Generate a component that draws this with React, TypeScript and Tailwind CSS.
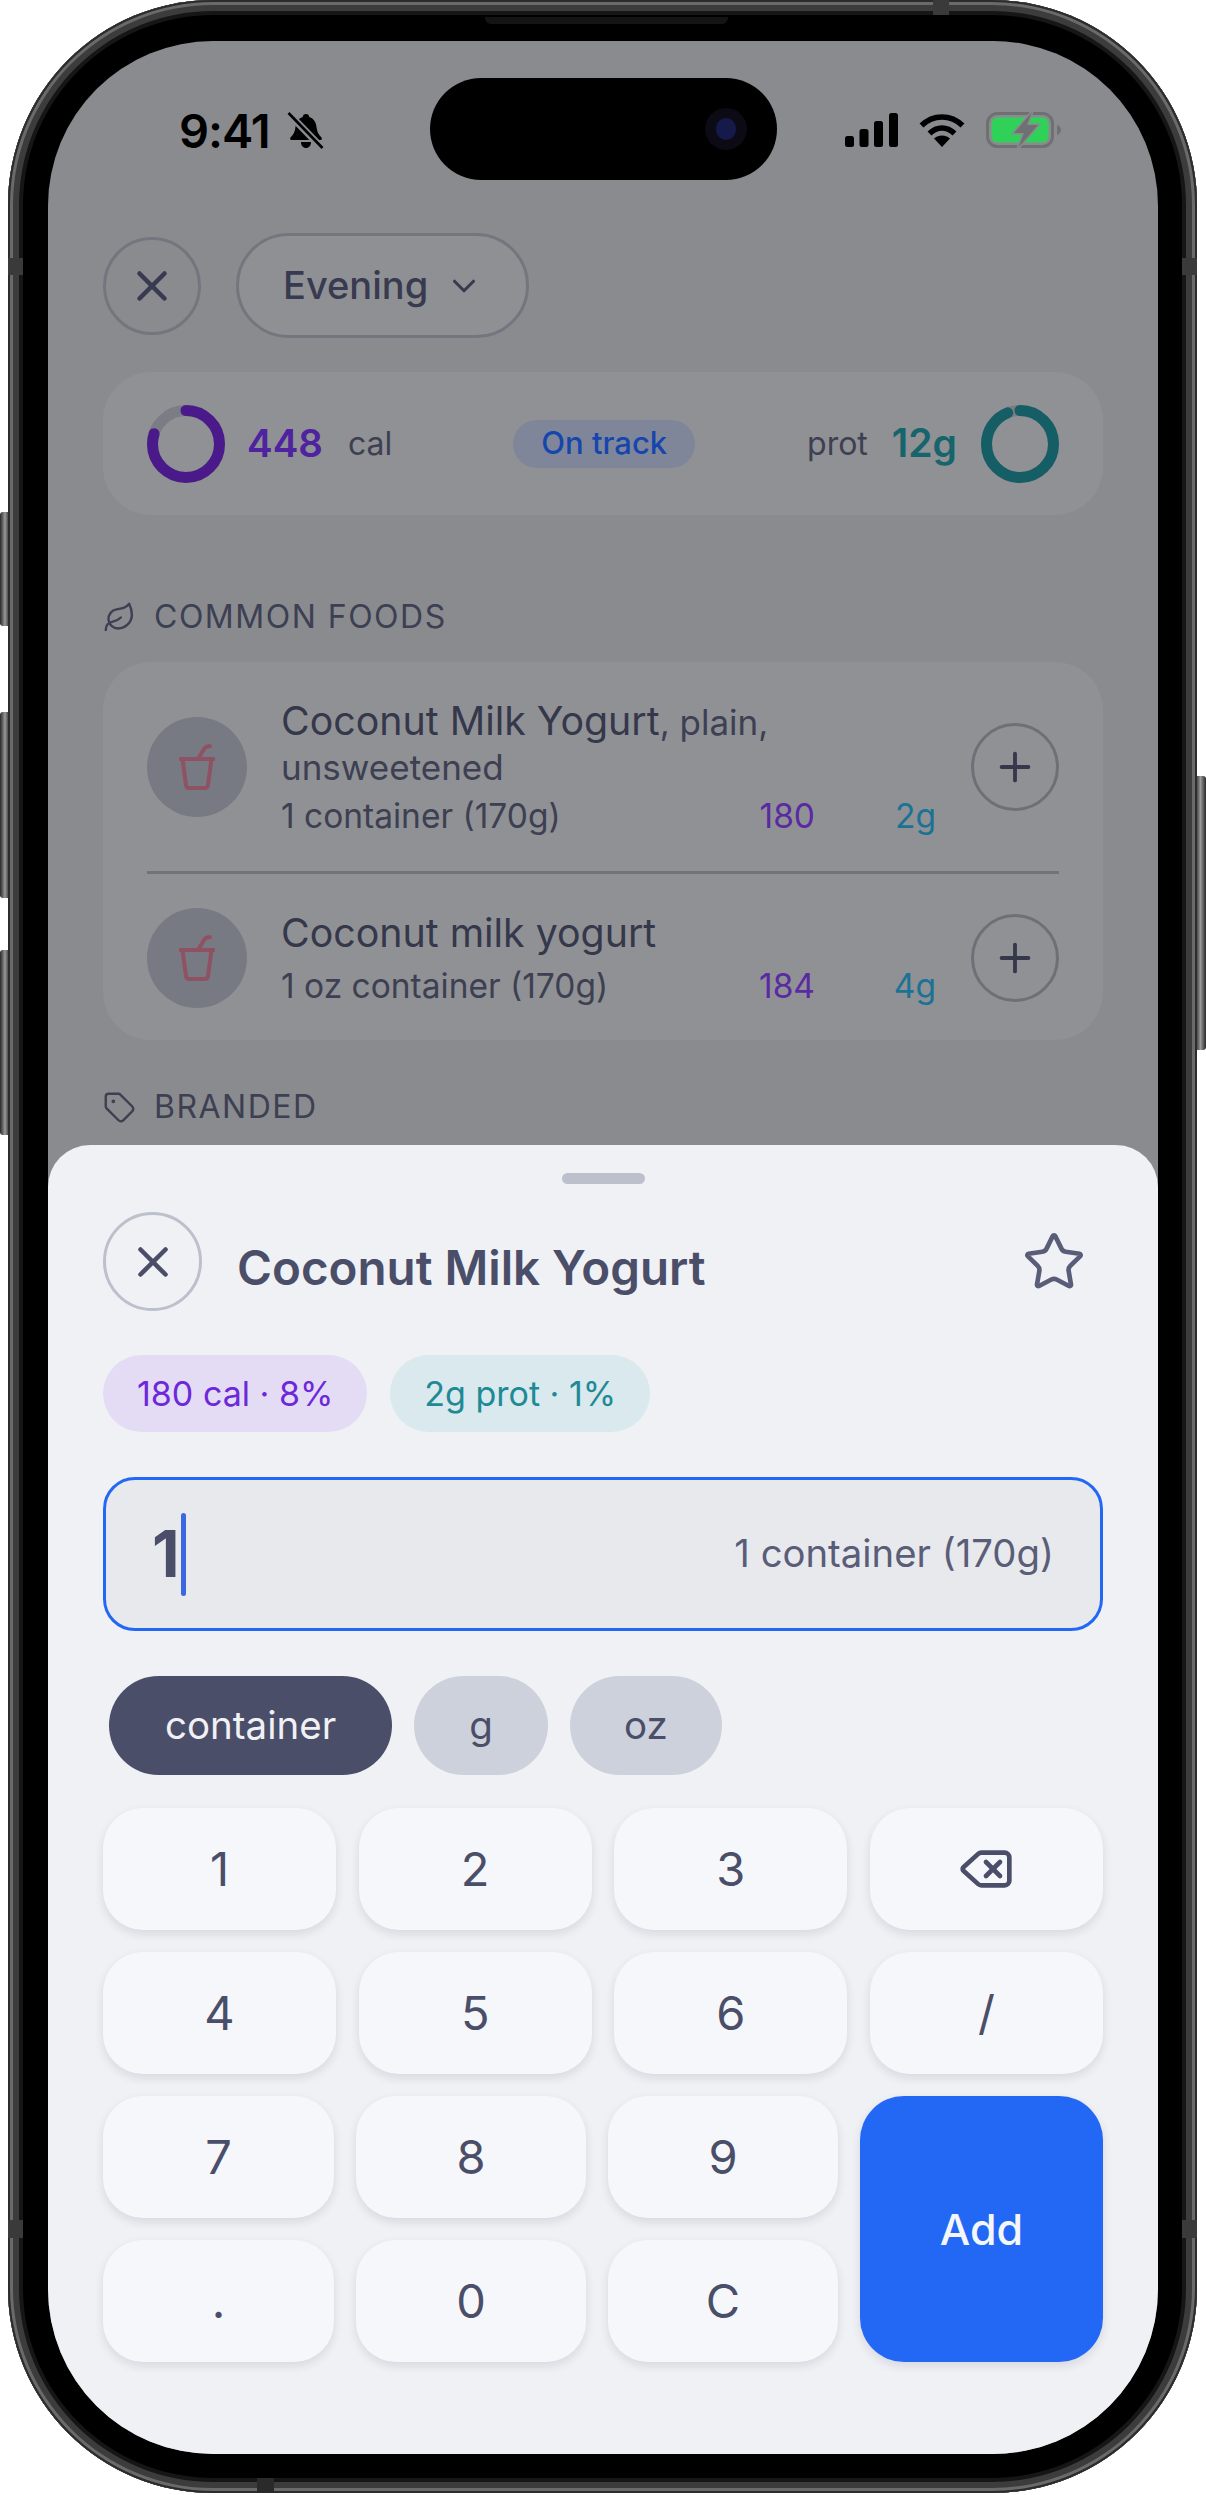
import { ChevronDown, Delete, Leaf, Plus, Star, Tag, X } from "lucide-react";

function Ring({ color, dash }: { color: string; dash: number }) {
  return (
    <svg width="78" height="78" viewBox="0 0 78 78" className="shrink-0 -rotate-90">
      <circle cx="39" cy="39" r="33.5" fill="none" stroke="#7b7d85" strokeWidth="11" />
      <circle
        cx="39"
        cy="39"
        r="33.5"
        fill="none"
        stroke={color}
        strokeWidth="11"
        strokeLinecap="round"
        pathLength={100}
        strokeDasharray={`${dash} 100`}
      />
    </svg>
  );
}

function BellSlash() {
  return (
    <svg width="38" height="37" viewBox="0 0 38 37">
      <path
        d="M19 2c2 0 3 1.200 3.300 3C27 6.500 29 10.500 29.500 15c.4 4 1.500 7 5 10.500.8 1 .3 2.500-1 2.500H4.500c-1.300 0-1.800-1.500-1-2.500C7 22 8.100 19 8.500 15 9 10.500 11 6.500 15.700 5 16 3.200 17 2 19 2z"
        fill="#000"
      />
      <path d="M14 30h10c0 3.500-2 6-5 6s-5-2.500-5-6z" fill="#000" />
      <path d="M3 3l32 33" stroke="#8a8b8f" strokeWidth="7" />
      <path d="M1.500 1l34 35" stroke="#000" strokeWidth="2.600" />
    </svg>
  );
}

function Signal() {
  return (
    <svg width="53" height="34" viewBox="0 0 53 34" fill="#000">
      <rect x="0" y="23" width="9" height="11" rx="2.500" />
      <rect x="14.500" y="16" width="9" height="18" rx="2.500" />
      <rect x="29" y="8" width="9" height="26" rx="2.500" />
      <rect x="44" y="0" width="9" height="34" rx="2.500" />
    </svg>
  );
}

function Wifi() {
  return (
    <svg width="46" height="34" viewBox="0 0 46 34" fill="none" stroke="#000" strokeWidth="5.500">
      <path d="M2.500 12.500C14 1 32 1 43.500 12.500" />
      <path d="M10.500 20.500C18 13 28 13 35.500 20.500" />
      <path d="M23 34l-8-8.500c4.500-4 11.500-4 16 0z" fill="#000" stroke="none" />
    </svg>
  );
}

function Battery() {
  return (
    <svg width="75" height="38" viewBox="0 0 75 38">
      <rect x="1.500" y="2.500" width="65" height="33" rx="10" fill="none" stroke="#6f7072" strokeWidth="3" />
      <rect x="5.500" y="6.500" width="57" height="25" rx="6" fill="#30d158" />
      <path d="M71 14c2.500.8 4 2.600 4 5s-1.500 4.200-4 5z" fill="#6f7072" />
      <path
        d="M46 1L28 22h10l-6 15 20-23H41z"
        fill="#6f7072"
        stroke="#8a8b8f"
        strokeWidth="3"
        paintOrder="stroke"
      />
    </svg>
  );
}

function CupIcon() {
  return (
    <svg width="36" height="46" viewBox="0 0 36 46" fill="none" stroke="#8f5262" strokeWidth="4" strokeLinecap="round" strokeLinejoin="round">
      <path d="M1.500 15h33" />
      <path d="M3.500 15l3.500 26c.2 2 1.500 3 3 3h16c1.500 0 2.800-1 3-3l3.500-26" />
      <path d="M19 15l6-10c1-1.800 3-3 6-2.800" />
    </svg>
  );
}

function SectionLabel({ icon, label, className }: { icon: React.ReactNode; label: string; className: string }) {
  return (
    <div className={`flex h-[36px] items-center gap-[18px] text-[#3d3f52] ${className}`}>
      {icon}
      <span className="text-[32px] tracking-[1.5px]">{label}</span>
    </div>
  );
}

function FoodRow({
  name,
  suffix,
  serving,
  cal,
  prot,
  last,
}: {
  name: string;
  suffix?: string;
  serving: string;
  cal: number;
  prot: string;
  last?: boolean;
}) {
  return (
    <div className={`flex items-center ${last ? "pb-[28px] pt-[30px]" : "border-b-[3px] border-[#72737a] pb-[29px] pt-[30px]"}`}>
      <div className="flex h-[100px] w-[100px] shrink-0 items-center justify-center rounded-full bg-[#777a83]">
        <CupIcon />
      </div>
      <div className="ml-[34px] min-w-0 flex-1 pt-[6px]">
        <div className="text-[35px] leading-[45px] text-[#3d3f52]">
          <span className="text-[39.3px] text-[#35374b]">{name}</span>
          {suffix}
        </div>
        <div className={`flex h-[52px] items-center text-[33.5px] text-[#3d3f52] ${last ? "mt-[3px]" : ""}`}>
          <span className="flex-1">{serving}</span>
          <span className="text-[#5a2aa2]">{cal}</span>
          <span className="w-[121px] text-right text-[#1a7295]">{prot}</span>
        </div>
      </div>
      <button className="ml-[35px] flex h-[88px] w-[88px] shrink-0 items-center justify-center rounded-full border-[3px] border-[#6e7078] text-[#35374b]">
        <Plus size={46} strokeWidth={2} />
      </button>
    </div>
  );
}

function Key({ children, className = "" }: { children: React.ReactNode; className?: string }) {
  return (
    <button
      className={`flex h-[122px] items-center justify-center rounded-[40px] bg-[#f6f7fa] text-[47px] text-[#4a4e69] shadow-[0_4px_10px_rgba(40,44,70,0.12)] ${className}`}
    >
      {children}
    </button>
  );
}

export default function App() {
  return (
    <div className="relative h-[2495px] w-[1206px] overflow-hidden bg-white pl-[8px] [font-family:Inter,sans-serif]">
      {/* side buttons */}
      <div className="absolute left-0 top-[512px] h-[114px] w-[10px] rounded-l-[3px] bg-gradient-to-r from-[#2a2a2a] via-[#9a9a9a] to-[#222]" />
      <div className="absolute left-0 top-[712px] h-[186px] w-[10px] rounded-l-[3px] bg-gradient-to-r from-[#2a2a2a] via-[#9a9a9a] to-[#222]" />
      <div className="absolute left-0 top-[950px] h-[185px] w-[10px] rounded-l-[3px] bg-gradient-to-r from-[#2a2a2a] via-[#9a9a9a] to-[#222]" />
      <div className="absolute right-0 top-[776px] h-[274px] w-[11px] rounded-r-[3px] bg-gradient-to-l from-[#2a2a2a] via-[#9a9a9a] to-[#222]" />

      {/* phone body */}
      <div className="relative h-[2493px] w-[1189px] rounded-[205px] bg-black pb-[39px] pl-[40px] pr-[39px] pt-[41px] shadow-[inset_0_0_0_2px_#2c2c2c,inset_0_0_0_5px_#6a6a6a,inset_0_0_0_11px_#3c3c3c,inset_0_0_0_15px_#161616]">
        <div className="absolute left-[477px] right-[469px] top-[17px] h-[7px] rounded-b-[6px] bg-[#141414]" />
        <div className="absolute right-[248px] top-0 h-[15px] w-[16px] bg-[#3a3a3a]" />
        <div className="absolute bottom-0 left-[249px] h-[15px] w-[17px] bg-[#2a2a2a]" />
        <div className="absolute left-0 top-[258px] h-[17px] w-[15px] bg-[#3a3a3a]" />
        <div className="absolute right-0 top-[258px] h-[17px] w-[15px] bg-[#3a3a3a]" />
        <div className="absolute left-0 top-[2220px] h-[18px] w-[15px] bg-[#3a3a3a]" />
        <div className="absolute right-0 top-[2220px] h-[18px] w-[15px] bg-[#3a3a3a]" />

        {/* screen */}
        <div className="relative h-full w-full overflow-hidden rounded-[165px] bg-[#8a8b8f]">
          <div className="flex h-[178px] items-center justify-between pl-[131px] pr-[97px]">
            <div className="flex items-center gap-[17px]">
              <span className="text-[47px] font-semibold leading-none tracking-[-1px] text-black">9:41</span>
              <BellSlash />
            </div>
            <div className="flex items-center gap-[21px]">
              <Signal />
              <Wifi />
              <Battery />
            </div>
          </div>
          <div className="absolute left-[382px] top-[37px] h-[102px] w-[347px] rounded-full bg-black">
            <div className="absolute left-[275px] top-[30px] h-[42px] w-[42px] rounded-full bg-[#0c0a14]">
              <div className="absolute left-[11px] top-[10px] h-[22px] w-[20px] rounded-full bg-[#161a4a]" />
            </div>
          </div>

          <div className="px-[55px]">
            <div className="mt-[14px] flex items-center">
              <button className="flex h-[98px] w-[98px] items-center justify-center rounded-full border-[3px] border-[#74767f] text-[#373a50]">
                <X size={50} strokeWidth={2.2} />
              </button>
              <button className="ml-[35px] flex h-[105px] w-[293px] items-center rounded-full border-[3px] border-[#74767f] bg-[#8f9094] pl-[44px] text-[38px] font-medium text-[#383a50]">
                Evening
                <ChevronDown size={38} strokeWidth={2} className="ml-[17px]" />
              </button>
            </div>

            <div className="mt-[34px] flex h-[143px] items-center rounded-[48px] bg-[#909194] px-[44px]">
              <Ring color="#4b1a8a" dash={80} />
              <span className="ml-[22px] text-[38.5px] font-semibold text-[#4f22a0]">448</span>
              <span className="ml-[25px] text-[32px] text-[#3d3f52]">cal</span>
              <span className="ml-[121px] flex h-[48px] w-[182px] items-center justify-center rounded-full bg-[#7f8699] text-[31px] font-medium text-[#1646ad]">
                On track
              </span>
              <span className="ml-auto text-[32px] text-[#3d3f52]">prot</span>
              <span className="ml-[24px] text-[39px] font-semibold text-[#16646c]">12g</span>
              <span className="ml-[24px]">
                <Ring color="#155e66" dash={94} />
              </span>
            </div>

            <SectionLabel icon={<Leaf size={33} strokeWidth={1.75} />} label="COMMON FOODS" className="mt-[84px]" />

            <div className="mt-[27px] rounded-[48px] bg-[#909194] px-[44px]">
              <FoodRow name="Coconut Milk Yogurt" suffix=", plain, unsweetened" serving="1 container (170g)" cal={180} prot="2g" />
              <FoodRow name="Coconut milk yogurt" serving="1 oz container (170g)" cal={184} prot="4g" last />
            </div>

            <SectionLabel icon={<Tag size={33} strokeWidth={1.75} />} label="BRANDED" className="mt-[49px]" />
          </div>

          {/* bottom sheet */}
          <div className="absolute inset-x-0 bottom-0 top-[1104px] rounded-t-[42px] bg-[#f0f1f5] px-[55px] pt-[28px]">
            <div className="mx-auto h-[11px] w-[83px] rounded-full bg-[#bcc0cc]" />

            <div className="mt-[28px] flex items-center">
              <button className="flex h-[99px] w-[99px] shrink-0 items-center justify-center rounded-full border-[3px] border-[#bcc0cc] text-[#4a4e69]">
                <X size={50} strokeWidth={2.2} />
              </button>
              <h1 className="ml-[35px] flex-1 pt-[12px] text-[47.5px] font-semibold text-[#4a4e69]">Coconut Milk Yogurt</h1>
              <button className="flex h-[98px] w-[98px] items-center justify-center text-[#5a5d78]">
                <Star size={64} strokeWidth={1.75} />
              </button>
            </div>

            <div className="mt-[44px] flex gap-[23px]">
              <span className="flex h-[77px] items-center rounded-full bg-[#e3dcf4] px-[34px] text-[34px] text-[#6d28d9]">
                180 cal · 8%
              </span>
              <span className="flex h-[77px] items-center rounded-full bg-[#d9e9ed] px-[34px] text-[34px] text-[#1e8a96]">
                2g prot · 1%
              </span>
            </div>

            <div className="mt-[45px] flex h-[154px] items-center rounded-[32px] border-[3px] border-[#2368f5] bg-[#e8e9ed] pl-[46px] pr-[46px]">
              <span className="text-[64px] font-bold text-[#4a4e69]">1</span>
              <span className="ml-[1px] h-[83px] w-[5px] rounded-full bg-[#3b68e0]" />
              <span className="ml-auto text-[38.3px] text-[#5a5d78]">1 container (170g)</span>
            </div>

            <div className="mt-[45px] flex gap-[22px] pl-[6px] text-[38.5px]">
              <span className="flex h-[99px] items-center rounded-full bg-[#4a4e69] px-[56px] text-[#f0f1f5]">container</span>
              <span className="flex h-[99px] items-center rounded-full bg-[#cdd1dc] px-[55px] text-[#4a4e69]">g</span>
              <span className="flex h-[99px] items-center rounded-full bg-[#cdd1dc] px-[54px] text-[#4a4e69]">oz</span>
            </div>

            <div className="mt-[33px] grid grid-cols-4 gap-x-[22.67px] gap-y-[22px]">
              {["1", "2", "3"].map((k) => (
                <Key key={k}>{k}</Key>
              ))}
              <Key>
                <Delete size={56} strokeWidth={2} />
              </Key>
              {["4", "5", "6", "/"].map((k) => (
                <Key key={k}>{k}</Key>
              ))}
            </div>

            <div className="mt-[22px] grid grid-cols-[231px_230px_230px_1fr] gap-x-[22px] gap-y-[22px]">
              {["7", "8", "9"].map((k) => (
                <Key key={k}>{k}</Key>
              ))}
              <button className="row-span-2 flex items-center justify-center rounded-[44px] bg-[#2368f5] text-[43px] font-medium text-[#f5f6fa] shadow-[0_4px_10px_rgba(40,44,70,0.12)]">
                Add
              </button>
              {[".", "0", "C"].map((k) => (
                <Key key={k}>{k}</Key>
              ))}
            </div>
          </div>
        </div>
      </div>
    </div>
  );
}
